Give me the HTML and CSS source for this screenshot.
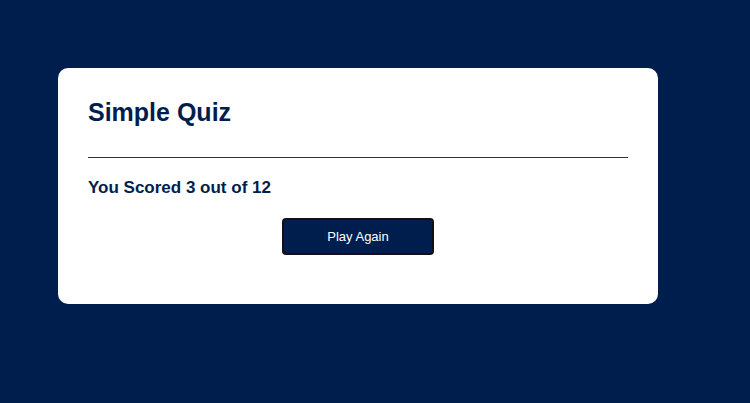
FILE: index.html
```html
<!DOCTYPE html>
<html>
<head>
<meta charset="utf-8">
<link rel="stylesheet" href="styles.css">
</head>
<body>
<div class="app">
  <h1 class="title">Simple Quiz</h1>
  <div class="quiz">
    <h2 class="score">You Scored 3 out of 12</h2>
    <button class="btn">Play Again</button>
  </div>
</div>
</body>
</html>
```
FILE: styles.css
```css
* { box-sizing: border-box; }
html, body { margin: 0; padding: 0; }
body {
  background: #001e4d;
  font-family: "Liberation Sans", Arial, sans-serif;
  width: 750px;
  height: 403px;
  overflow: hidden;
  padding-top: 68px;
}
.app {
  background: #fff;
  width: 600px;
  margin-left: 58px;
  border-radius: 10px;
  padding: 30px 30px 49px;
}
.title {
  margin: 0;
  font-size: 25px;
  line-height: 28px;
  font-weight: 700;
  color: #001e4d;
  padding-bottom: 31px;
  border-bottom: 1px solid #333;
}
.quiz {
  display: flex;
  flex-direction: column;
  align-items: center;
}
.score {
  align-self: stretch;
  margin: 20px 0 0;
  font-size: 17px;
  line-height: 20px;
  font-weight: 700;
  color: #001e4d;
}
.btn {
  margin-top: 20px;
  width: 152px;
  height: 37px;
  background: #001e4d;
  color: #fff;
  border: 2px solid #111;
  border-radius: 4px;
  font-family: "Liberation Sans", Arial, sans-serif;
  font-size: 13px;
  padding: 0;
}
```
